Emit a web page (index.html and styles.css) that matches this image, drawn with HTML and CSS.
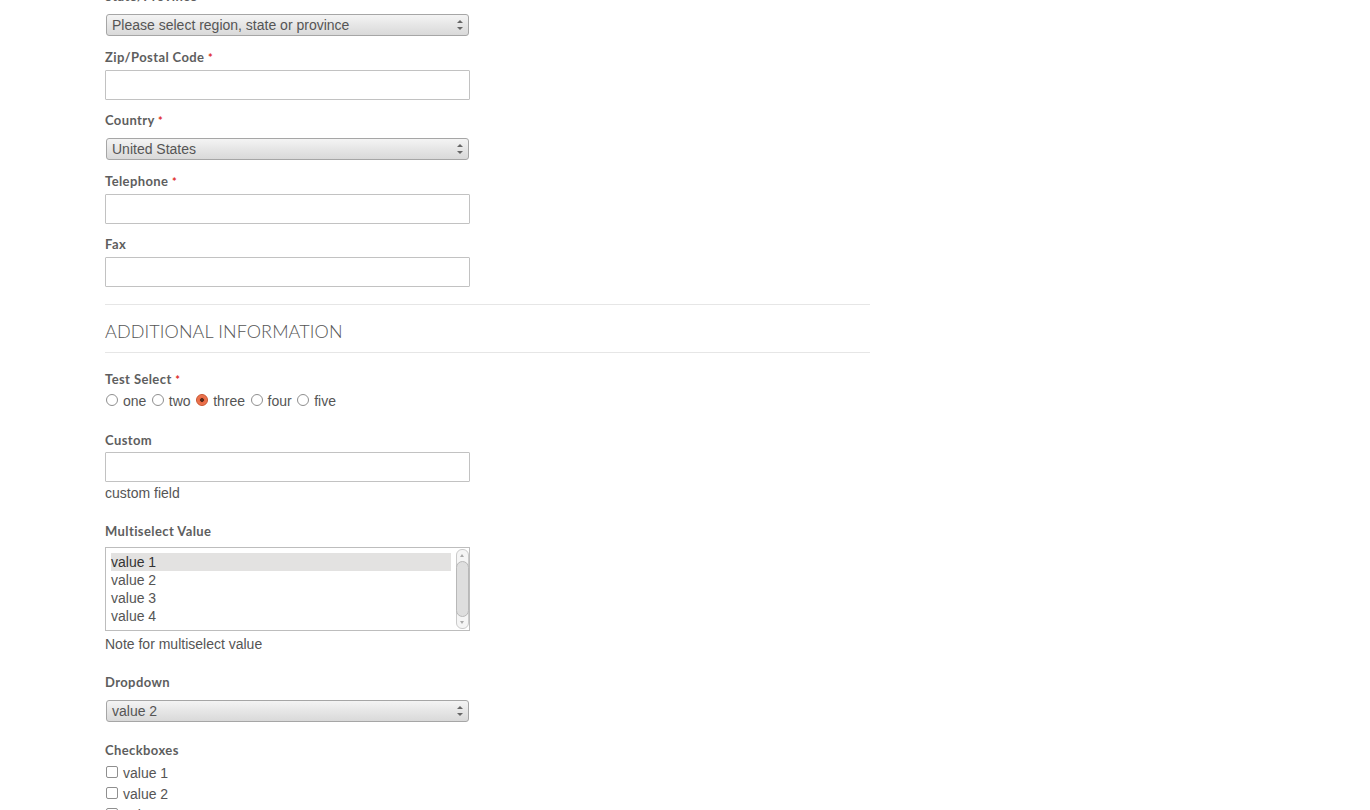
FILE: index.html
```html
<!DOCTYPE html>
<html>
<head>
<meta charset="utf-8">
<link rel="stylesheet" href="styles.css">
</head>
<body>
<div class="page">
  <div class="field field-select">
    <div class="label">State/Province <span class="req">*</span></div>
    <div class="select"><span>Please select region, state or province</span><span class="arrows"></span></div>
  </div>
  <div class="field">
    <div class="label">Zip/Postal Code <span class="req">*</span></div>
    <div class="input"></div>
  </div>
  <div class="field field-select">
    <div class="label">Country <span class="req">*</span></div>
    <div class="select"><span>United States</span><span class="arrows"></span></div>
  </div>
  <div class="field">
    <div class="label">Telephone <span class="req">*</span></div>
    <div class="input"></div>
  </div>
  <div class="field field-last">
    <div class="label">Fax</div>
    <div class="input"></div>
  </div>

  <div class="section-title">Additional Information</div>

  <div class="field field-radios">
    <div class="label">Test Select <span class="req">*</span></div>
    <div class="radios">
      <span class="radio"></span><span class="opt">one</span>
      <span class="radio"></span><span class="opt">two</span>
      <span class="radio checked"></span><span class="opt">three</span>
      <span class="radio"></span><span class="opt">four</span>
      <span class="radio"></span><span class="opt">five</span>
    </div>
  </div>
  <div class="field field-loose">
    <div class="label label-tight">Custom</div>
    <div class="input"></div>
    <div class="note">custom field</div>
  </div>
  <div class="field field-loose">
    <div class="label">Multiselect Value</div>
    <div class="listbox">
      <div class="options">
        <div class="option selected">value 1</div>
        <div class="option">value 2</div>
        <div class="option">value 3</div>
        <div class="option">value 4</div>
      </div>
      <div class="scrollbar">
        <div class="sb-btn sb-up"></div>
        <div class="sb-thumb"></div>
        <div class="sb-btn sb-down"></div>
      </div>
    </div>
    <div class="note note-list">Note for multiselect value</div>
  </div>
  <div class="field field-select field-dropdown">
    <div class="label">Dropdown</div>
    <div class="select"><span>value 2</span><span class="arrows"></span></div>
  </div>
  <div class="field">
    <div class="label">Checkboxes</div>
    <div class="check-row"><span class="checkbox"></span><span class="opt">value 1</span></div>
    <div class="check-row"><span class="checkbox"></span><span class="opt">value 2</span></div>
    <div class="check-row"><span class="checkbox"></span><span class="opt">value 3</span></div>
  </div>
</div>
</body>
</html>
```
FILE: styles.css
```css
html, body {
  margin: 0;
  padding: 0;
  background: #fff;
}
body {
  font-family: "Liberation Sans", Arial, sans-serif;
  font-size: 14px;
  color: #555;
  overflow: hidden;
  height: 810px;
}
.page {
  width: 765px;
  margin-left: 105px;
  margin-top: -13px;
}
.field {
  margin-bottom: 11px;
}
.field-select {
  margin-bottom: 12px;
}
.field-loose {
  margin-bottom: 19px;
}
.field-dropdown {
  margin-bottom: 19px;
}
.field-radios {
  margin-bottom: 20px;
}
.field-last {
  margin-bottom: 17px;
}
.label {
  font-family: "Lato", "Open Sans", sans-serif;
  font-weight: 700;
  font-size: 13px;
  line-height: 18px;
  letter-spacing: 0.4px;
  color: #5e5e5e;
  margin-bottom: 4px;
}
.label-tight {
  margin-bottom: 3px;
}
.req {
  color: #e02b27;
  font-size: 11px;
  line-height: 0;
}
.input {
  width: 363px;
  height: 28px;
  border: 1px solid #c2c2c2;
  border-radius: 1px;
  background: #fff;
}
.field-select .select {
  margin-top: 9px;
}
.select {
  height: 20px;
  width: 356px;
  margin-left: 1px;
  border: 1px solid #a6a6a6;
  border-radius: 3px;
  background: linear-gradient(#f4f4f4, #e6e6e6 50%, #d9d9d9);
  display: flex;
  align-items: center;
  justify-content: space-between;
  padding-left: 5px;
  font-size: 14px;
  color: #555;
  line-height: 20px;
}
.arrows {
  position: relative;
  width: 14px;
  height: 20px;
}
.arrows::before, .arrows::after {
  content: "";
  position: absolute;
  left: 3px;
  border-left: 3px solid transparent;
  border-right: 3px solid transparent;
}
.arrows::before {
  top: 5px;
  border-bottom: 3px solid #666;
}
.arrows::after {
  top: 12px;
  border-top: 3px solid #666;
}
.section-title {
  border-top: 1px solid #e6e6e6;
  border-bottom: 1px solid #e6e6e6;
  padding: 14px 0 9px;
  font-family: "Lato", "Open Sans", sans-serif;
  font-weight: 300;
  font-size: 18px;
  line-height: 24px;
  letter-spacing: 0.1px;
  text-transform: uppercase;
  color: #555;
  margin-bottom: 17px;
}
.radios {
  display: flex;
  align-items: center;
  height: 20px;
  line-height: 20px;
  margin-top: -1px;
}
.radio {
  border: 1px solid #8f8f8f;
  border-radius: 50%;
  margin: 0 5px 3px 1px;
  box-sizing: border-box;
  width: 12px;
  height: 12px;
  background: #fff;
  flex: none;
}
.radio.checked {
  border-color: #c9502a;
  background: radial-gradient(circle, #5a2a1a 0 1.6px, #e8653f 2.2px, #f08a66 100%);
}
.opt {
  margin-right: 4.5px;
}
.note {
  line-height: 20px;
  margin-top: 1px;
}
.note-list {
  margin-top: 3px;
}
.listbox {
  margin-top: 7px;
  width: 363px;
  height: 82px;
  border: 1px solid #bdbdbd;
  display: flex;
  background: #fff;
}
.options {
  width: 340px;
  flex: none;
  padding: 5px 0 0 5px;
}
.option {
  height: 18px;
  line-height: 18px;
  color: #555;
}
.option.selected {
  background: #e3e2e1;
  color: #333;
}
.scrollbar {
  width: 11px;
  margin: 1px 0 1px 5px;
  display: flex;
  flex-direction: column;
  border: 1px solid #cacaca;
  border-radius: 6px;
  background: #f5f5f5;
}
.sb-btn {
  height: 11px;
  position: relative;
  flex: none;
}
.sb-btn::after {
  content: "";
  position: absolute;
  left: 3px;
  border-left: 2.5px solid transparent;
  border-right: 2.5px solid transparent;
}
.sb-up::after {
  top: 4px;
  border-bottom: 3px solid #aaa;
}
.sb-down::after {
  top: 4px;
  border-top: 3px solid #aaa;
}
.sb-thumb {
  flex: 1;
  margin: 0 -1px;
  border: 1px solid #b8b8b8;
  border-radius: 7px;
  background: #dedede;
}
.check-row {
  display: flex;
  align-items: center;
  height: 21px;
  line-height: 21px;
}
.checkbox {
  width: 12px;
  height: 12px;
  box-sizing: border-box;
  border: 1px solid #8f8f8f;
  border-radius: 2px;
  margin: 0 5px 4px 1px;
  background: #fff;
  flex: none;
}
```
